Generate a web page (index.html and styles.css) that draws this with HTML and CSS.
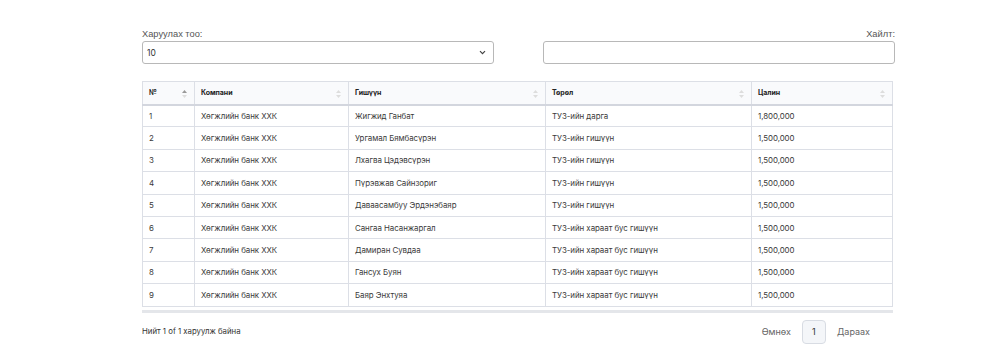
FILE: index.html
```html
<!DOCTYPE html>
<html lang="mn">
<head>
  <meta charset="UTF-8" />
  <title>Гишүүд</title>
  <link rel="stylesheet" href="styles.css">
</head>
<body>
  <div class="wrapper">
    <!-- Дээд хэсэг -->
    <div class="controls">
      <label class="length">
        <span>Харуулах тоо:</span>
        <select>
          <option>10</option>
        </select>
      </label>
      <label class="search">
        <span>Хайлт:</span>
        <input type="text">
      </label>
    </div>

    <div class="table-box">
      <table class="members">
        <thead>
          <tr>
            <th class="col-no sorted">№</th>
            <th class="col-company">Компани</th>
            <th class="col-name">Гишүүн</th>
            <th class="col-type">Төрөл</th>
            <th class="col-salary">Цалин</th>
          </tr>
        </thead>
        <tbody>
          <tr><td>1</td><td>Хөгжлийн банк ХХК</td><td>Жигжид Ганбат</td><td>ТУЗ-ийн дарга</td><td>1,800,000</td></tr>
          <tr><td>2</td><td>Хөгжлийн банк ХХК</td><td>Ургамал Бямбасүрэн</td><td>ТУЗ-ийн гишүүн</td><td>1,500,000</td></tr>
          <tr><td>3</td><td>Хөгжлийн банк ХХК</td><td>Лхагва Цэдэвсүрэн</td><td>ТУЗ-ийн гишүүн</td><td>1,500,000</td></tr>
          <tr><td>4</td><td>Хөгжлийн банк ХХК</td><td>Пүрэвжав Сайнзориг</td><td>ТУЗ-ийн гишүүн</td><td>1,500,000</td></tr>
          <tr><td>5</td><td>Хөгжлийн банк ХХК</td><td>Даваасамбуу Эрдэнэбаяр</td><td>ТУЗ-ийн гишүүн</td><td>1,500,000</td></tr>
          <tr><td>6</td><td>Хөгжлийн банк ХХК</td><td>Сангаа Насанжаргал</td><td>ТУЗ-ийн хараат бус гишүүн</td><td>1,500,000</td></tr>
          <tr><td>7</td><td>Хөгжлийн банк ХХК</td><td>Дамиран Сувдаа</td><td>ТУЗ-ийн хараат бус гишүүн</td><td>1,500,000</td></tr>
          <tr><td>8</td><td>Хөгжлийн банк ХХК</td><td>Гансух Буян</td><td>ТУЗ-ийн хараат бус гишүүн</td><td>1,500,000</td></tr>
          <tr><td>9</td><td>Хөгжлийн банк ХХК</td><td>Баяр Энхтуяа</td><td>ТУЗ-ийн хараат бус гишүүн</td><td>1,500,000</td></tr>
        </tbody>
      </table>
    </div>

    <div class="footer">
      <div class="info">Нийт 1 of 1 харуулж байна</div>
      <nav class="pager">
        <a>Өмнөх</a>
        <a class="current">1</a>
        <a>Дараах</a>
      </nav>
    </div>
  </div>
</body>
</html>
```

FILE: styles.css
```css
* {
  box-sizing: border-box;
}

body, html {
  margin: 0;
  padding: 0;
  background: #fff;
  font-family: 'Inter', sans-serif;
  color: #333;
}

.wrapper {
  width: 753px;
  margin-left: 142px;
  padding-top: 28px;
}

.controls {
  display: flex;
  justify-content: space-between;
  gap: 49px;
}

.controls label {
  flex: 1;
  display: flex;
  flex-direction: column;
  font-family: 'Liberation Sans', Arial, sans-serif;
  font-size: 9.3px;
  color: #555;
}

.controls span {
  line-height: 13px;
}

.search span {
  text-align: right;
}

.controls select,
.controls input {
  height: 23px;
  border: 1px solid #b8b8b8;
  border-radius: 3px;
  background: #fff;
  font-family: 'Inter', sans-serif;
  font-size: 8.5px;
  color: #333;
  outline: none;
}

.controls select {
  appearance: none;
  padding: 0 20px 0 4px;
  background-image: url("data:image/svg+xml,%3Csvg xmlns='http://www.w3.org/2000/svg' width='7' height='5' viewBox='0 0 7 5'%3E%3Cpath d='M1 1.2l2.5 2.5 2.5-2.5' fill='none' stroke='%23444' stroke-width='1.2'/%3E%3C/svg%3E");
  background-repeat: no-repeat;
  background-position: right 7px center;
}

.table-box {
  margin-top: 17px;
  width: 751px;
  border-bottom: 3px solid #e4e6ea;
  padding-bottom: 3px;
}

.members {
  width: 100%;
  border-collapse: collapse;
  font-size: 7.9px;
  letter-spacing: -0.05px;
  color: #3a3a3a;
}

.members th,
.members td {
  border: 1px solid #dcdfe6;
  text-align: left;
  padding: 0 6px;
  white-space: nowrap;
}

.members th {
  position: relative;
  height: 23px;
  background: #f9fafc;
  font-weight: 700;
  font-size: 7px;
  color: #222;
  border-bottom: 2px solid #d3d6de;
}

.members th::after {
  content: "";
  position: absolute;
  right: 7px;
  top: 8px;
  width: 5px;
  height: 8px;
  background-image: url("data:image/svg+xml,%3Csvg xmlns='http://www.w3.org/2000/svg' width='5' height='8' viewBox='0 0 5 8'%3E%3Cpath d='M2.5 0L5 3H0z' fill='%23ddd'/%3E%3Cpath d='M2.5 8L5 5H0z' fill='%23ddd'/%3E%3C/svg%3E");
}

.members th.sorted::after {
  background-image: url("data:image/svg+xml,%3Csvg xmlns='http://www.w3.org/2000/svg' width='5' height='8' viewBox='0 0 5 8'%3E%3Cpath d='M2.5 0L5 3H0z' fill='%23999'/%3E%3Cpath d='M2.5 8L5 5H0z' fill='%23ddd'/%3E%3C/svg%3E");
}

.members td {
  height: 22.4px;
}

.col-no { width: 52px; }
.col-company { width: 154px; }
.col-name { width: 197px; }
.col-type { width: 206px; }

.footer {
  display: flex;
  justify-content: space-between;
  align-items: center;
  margin-top: 7px;
}

.info {
  font-size: 7.8px;
  color: #333;
  margin-top: -1px;
}

.pager {
  display: flex;
  align-items: center;
  gap: 11px;
  margin-right: 25px;
}

.pager a {
  font-size: 9px;
  color: #666;
  cursor: pointer;
}

.pager .current {
  width: 24px;
  height: 24px;
  display: flex;
  align-items: center;
  justify-content: center;
  border: 1px solid #d8dce3;
  border-radius: 4px;
  background: #f4f6f9;
  color: #333;
}
```
